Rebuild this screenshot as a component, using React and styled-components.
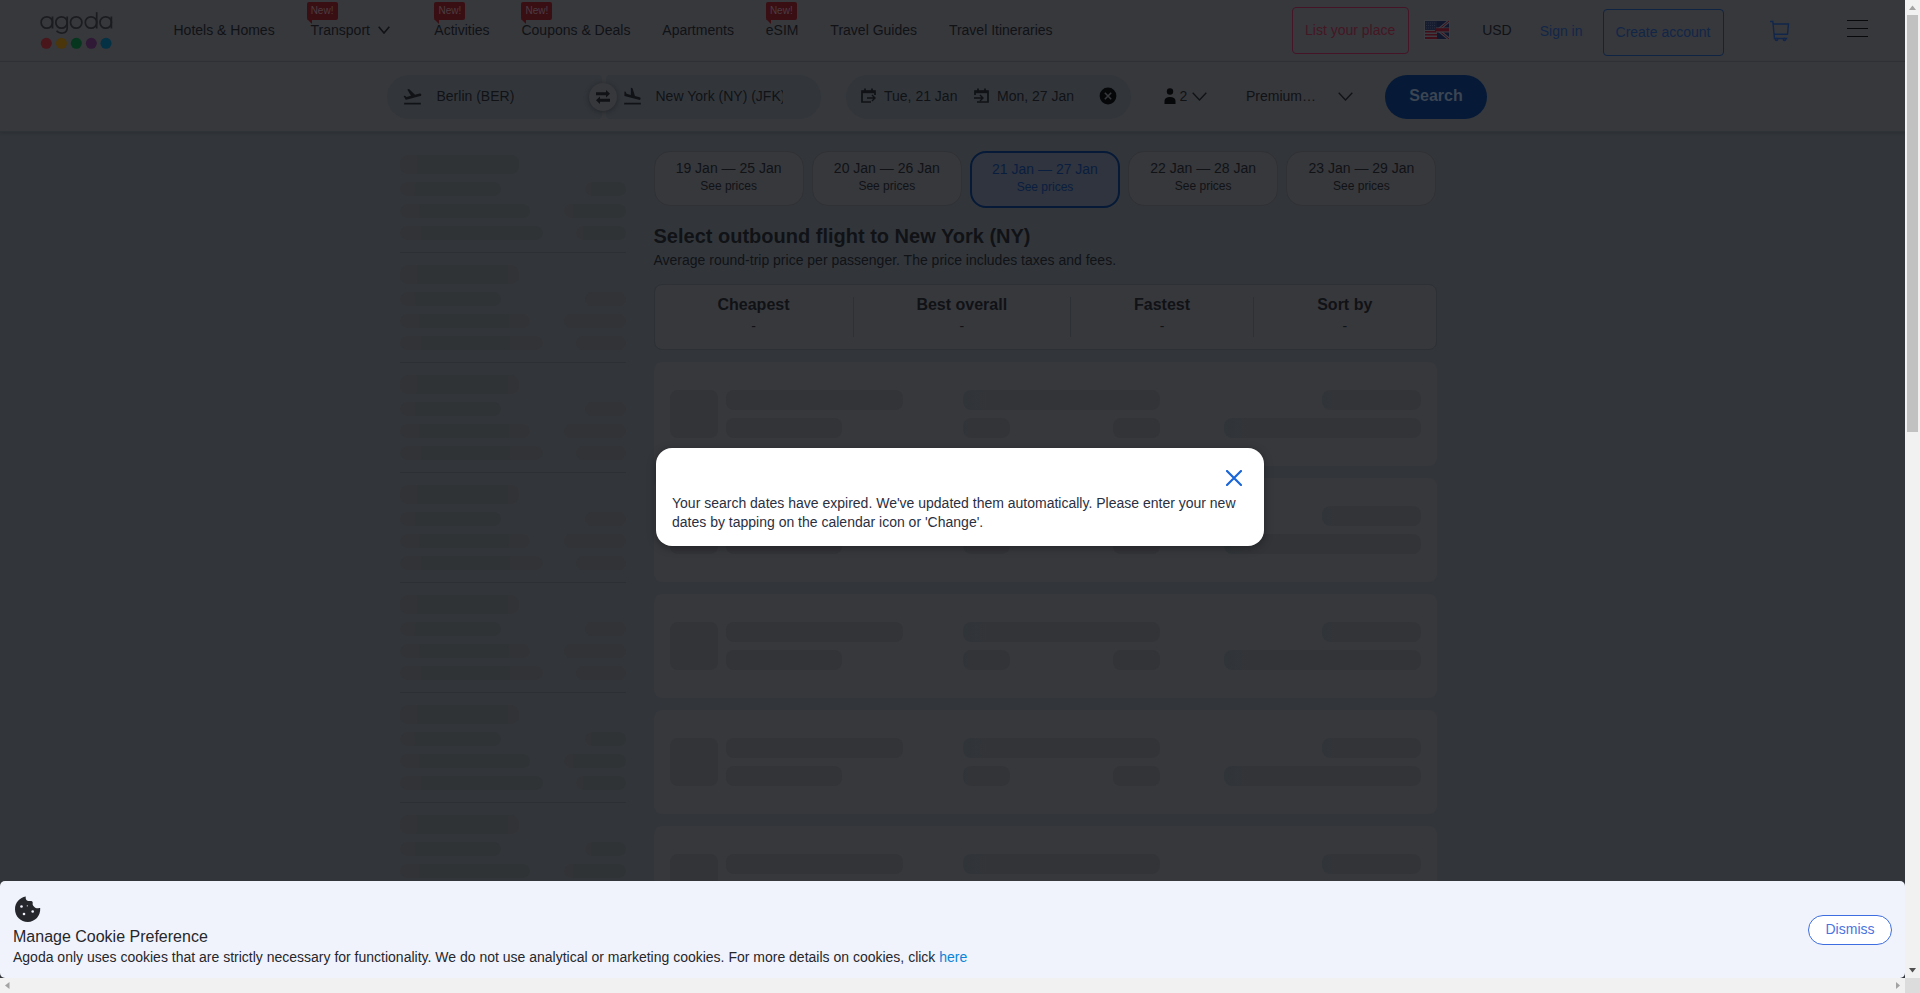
import React from 'react';
import styled, { createGlobalStyle } from 'styled-components';
import { MdFlightTakeoff, MdFlightLand } from 'react-icons/md';

const c = {
  surface: '#37383c',
  page: '#32363b',
  text: '#101216',
  blue: '#122648',
  navy: '#061a38',
  pink: '#451624',
  red: '#3a0f14',
  bone: '#333438',
};

const Global = createGlobalStyle`
  * { box-sizing: border-box; }
  html, body { margin: 0; height: 100%; overflow: hidden; }
  body { font: 14px/18px "Liberation Sans", Arial, sans-serif; color: ${c.text}; background: ${c.page}; }
  button { font: inherit; color: inherit; background: none; border: 0; padding: 0; }
`;

const Window = styled.div`
  display: grid;
  grid-template-columns: 1905px 15px;
  grid-template-rows: 978px 15px;
  width: 1920px;
  height: 993px;
`;
const Viewport = styled.div`
  position: relative;
  overflow: hidden;
  background: ${c.page};
`;
const Header = styled.header`
  display: flex;
  height: 62px;
  padding-left: 40px;
  background: ${c.surface};
  border-bottom: 1px solid #313237;
`;
const Logo = styled.svg`
  display: block;
  flex: none;
  width: 74px;
  height: 44px;
  margin-top: 8px;
`;
const Nav = styled.nav`
  display: flex;
  gap: 31.9px;
  margin-left: 59.5px;
`;
const NavItem = styled.a`
  position: relative;
  display: flex;
  height: 60px;
  align-items: center;
  white-space: nowrap;
  padding: ${(p) => (p.$menu ? '0 12.5px 0 4px' : '0')};
  svg { margin-left: 8px; }
`;
const Badge = styled.span`
  position: absolute;
  top: 2px;
  left: 0;
  width: 31px;
  height: 18px;
  border-radius: 2px;
  background: ${c.red};
  color: #4a3d42;
  font-size: 10px;
  line-height: 17px;
  text-align: center;
  &::after {
    content: '';
    position: absolute;
    left: 0;
    top: 17px;
    border-top: 5px solid ${c.red};
    border-left: 5px solid transparent;
  }
`;
const HeaderTools = styled.div`
  display: flex;
  align-items: flex-start;
  margin-left: auto;
  padding-right: 37.5px;
`;
const OutlineButton = styled.button`
  width: ${(p) => p.$w}px;
  height: 47px;
  margin-top: ${(p) => p.$top}px;
  margin-left: ${(p) => p.$ml || 0}px;
  padding-bottom: 1px;
  border: 1px solid ${(p) => p.$line};
  border-radius: 4px;
  color: ${(p) => p.$color};
`;
const Tool = styled.div`
  display: flex;
  height: ${(p) => p.$h || 60}px;
  align-items: center;
  margin-left: ${(p) => p.$ml}px;
  color: ${(p) => p.$color || c.text};
`;

const SearchBar = styled.section`
  display: flex;
  height: 70px;
  padding: 13px 0 0 387px;
  background: ${c.surface};
  border-bottom: 1px solid #2e3337;
  box-shadow: 0 1px 3px rgba(20, 24, 28, 0.25);
`;
const Field = styled.div`
  display: flex;
  align-items: center;
  width: ${(p) => p.$w}px;
  height: 44px;
  padding: 0 0 2px ${(p) => p.$pl}px;
  margin-left: ${(p) => p.$ml || 0}px;
  border-radius: ${(p) => p.$r || '22px'};
  background: ${(p) => (p.$plain ? 'transparent' : c.page)};
  white-space: nowrap;
  svg { flex: none; }
`;
const FieldText = styled.span`
  margin-left: ${(p) => p.$ml}px;
  width: ${(p) => (p.$w ? `${p.$w}px` : 'auto')};
  overflow: hidden;
`;
const Route = styled.div`
  position: relative;
  display: flex;
  gap: 4px;
`;
const Swap = styled.button`
  position: absolute;
  left: 202px;
  top: 8px;
  display: grid;
  place-items: center;
  width: 28px;
  height: 28px;
  border-radius: 50%;
  background: ${c.surface};
  box-shadow: 0 1px 5px rgba(10, 12, 16, 0.4);
`;
const SearchButton = styled.button`
  width: 102px;
  height: 44px;
  margin-left: 32px;
  padding-bottom: 3px;
  border-radius: 22px;
  background: ${c.navy};
  color: #3c4552;
  font-size: 16px;
  font-weight: 700;
`;

const Content = styled.main`
  display: flex;
  gap: 27.5px;
  padding: 19px 0 0 400px;
`;
const Sidebar = styled.aside`
  width: 226px;
  padding-top: 4px;
`;
const FilterGroup = styled.div`
  display: flex;
  flex-direction: column;
  height: 98px;
  margin-bottom: 12px;
  gap: 8px;
  border-bottom: 1px solid #2c3035;
`;
const FilterRow = styled.div`
  display: flex;
  justify-content: space-between;
`;
const FilterBone = styled.div`
  width: ${(p) => p.$w}px;
  height: ${(p) => p.$h || 14}px;
  border-radius: 7px;
  background: ${(p) => (p.$flat ? '#323336' : `linear-gradient(90deg, #323336 14%, #2f3336 15%, #2f3336 ${p.$end}%, #323336 ${p.$end}%)`)};
`;
const Results = styled.section`
  width: 783px;
`;
const DateRow = styled.div`
  display: grid;
  grid-template-columns: repeat(5, 1fr);
  gap: 8px;
  height: 57px;
  align-items: start;
`;
const DateChip = styled.button`
  display: flex;
  flex-direction: column;
  align-items: center;
  height: ${(p) => (p.$on ? 57 : 55)}px;
  padding-top: 7px;
  border: ${(p) => (p.$on ? `2px solid ${c.navy}` : '1px solid #303135')};
  border-radius: 16px;
  background: ${(p) => (p.$on ? '#30343e' : c.surface)};
  color: ${(p) => (p.$on ? '#0a1e40' : c.text)};
  small { font-size: 12px; line-height: 18px; }
`;
const Title = styled.h1`
  margin: 16px 0 0;
  font-size: 20px;
  line-height: 24px;
`;
const Note = styled.p`
  margin: 3px 0 0;
`;
const SortBar = styled.div`
  display: grid;
  grid-template-columns: 199px 217.5px 183px 1fr;
  height: 66px;
  margin-top: 15px;
  padding: 12px 0;
  border: 1px solid #2d3035;
  border-radius: 8px;
  background: ${c.surface};
`;
const SortCell = styled.div`
  height: 40px;
  text-align: center;
  line-height: 24px;
  border-right: 1px solid #2d3035;
  &:last-child { border-right: 0; }
  b { display: block; font-size: 16px; line-height: 18px; margin-top: -1px; }
`;
const Cards = styled.div`
  display: flex;
  flex-direction: column;
  gap: 12px;
  margin-top: 12px;
`;
const Card = styled.div`
  display: flex;
  align-items: flex-start;
  height: 104px;
  padding: 28px 16px;
  border-radius: 8px;
  background: ${c.surface};
`;
const BoneBlock = styled.div`
  display: flex;
  flex-wrap: wrap;
  justify-content: ${(p) => p.$justify || 'space-between'};
  gap: 8px 0;
  width: ${(p) => p.$w}px;
  margin-left: ${(p) => p.$ml}px;
`;
const Bone = styled.div`
  width: ${(p) => p.$w}px;
  height: ${(p) => p.$h || 20}px;
  border-radius: 8px;
  background: ${(p) => (p.$tint ? 'linear-gradient(90deg, #303539, #333438 14%)' : c.bone)};
`;

const Modal = styled.div`
  position: absolute;
  left: 656px;
  top: 448px;
  display: flex;
  flex-direction: column;
  width: 608px;
  height: 98px;
  padding: 22px 16px 0;
  border-radius: 16px;
  background: #fff;
  color: #2a2f3f;
  box-shadow: 0 2px 8px rgba(0, 0, 0, 0.35);
  line-height: 19px;
`;
const CloseButton = styled.button`
  align-self: flex-end;
  width: 16px;
  height: 16px;
  margin: 0 6px 8px 0;
  svg { display: block; }
`;
const CookieBar = styled.div`
  position: absolute;
  left: 0;
  bottom: 0;
  display: flex;
  justify-content: space-between;
  width: 1905px;
  height: 97px;
  padding: 15px 13px 0;
  border-radius: 5px;
  background: #f0f3fb;
  color: #26272c;
`;
const CookieIcon = styled.svg`
  display: block;
  width: 28px;
  height: 26px;
`;
const CookieTitle = styled.div`
  font-size: 16px;
  line-height: 20px;
  margin-top: 5px;
`;
const CookieText = styled.div`
  line-height: 20px;
  a { color: #0a84d8; }
`;
const Dismiss = styled.button`
  width: 84px;
  height: 30px;
  margin-top: 19px;
  padding-bottom: 2px;
  border: 1px solid #3d6de0;
  border-radius: 15px;
  background: #fff;
  color: #4a74e0;
`;

const VTrack = styled.div`
  display: flex;
  flex-direction: column;
  align-items: center;
  background: #f1f1f1;
  svg { display: block; }
`;
const VThumb = styled.div`
  width: 11px;
  height: 417px;
  margin-bottom: auto;
  background: #c1c1c1;
`;
const HTrack = styled.div`
  display: flex;
  justify-content: space-between;
  background: #f1f1f1;
`;
const Corner = styled.div`
  background: #dcdcdc;
`;

const Arrow = ({ d, fill = '#a3a3a3' }) => (
  <svg width="15" height="15"><path d={d} fill={fill} /></svg>
);
const Chevron = ({ w = 15, h = 9, s = 1.3 }) => (
  <svg width={w} height={h} fill="none" stroke={c.text} strokeWidth={s}>
    <path d={`M.7 .7 L${w / 2} ${h - 1} L${w - 0.7} .7`} />
  </svg>
);
const CalendarIcon = ({ back }) => (
  <svg width="15" height="16" viewBox="0 0 15 16" fill="none" stroke={c.text} strokeWidth="1.7">
    <path d={back ? 'M1 7V3h13v11H3' : 'M14 7V3H1v11h9'} />
    <path d="M1 4h13" strokeWidth="2.4" />
    <path d="M4 .5V4M11 .5V4" />
    <path d={back ? 'M0 10h8M6 7l3 3-3 3' : 'M6 10h7M11 7l3 3-3 3'} strokeWidth="1.4" />
  </svg>
);
const AgodaLogo = () => (
  <Logo viewBox="0 0 74 44" fill="none" stroke="#1b1c20" strokeWidth="1.7">
    <circle cx="6.8" cy="14.5" r="5.7" /><path d="M12.5 8.5v12" />
    <circle cx="21.5" cy="14.5" r="5.7" /><path d="M27.2 8.5v11.5c0 6-8 6.4-10.6 2.8" />
    <circle cx="36.2" cy="14.5" r="5.7" />
    <circle cx="51" cy="14.5" r="5.7" /><path d="M56.7 4.2v16.3" />
    <circle cx="65.7" cy="14.5" r="5.7" /><path d="M71.4 8.5v12" />
    <g stroke="none">
      <circle cx="6.3" cy="35.3" r="5.5" fill="#48161b" />
      <circle cx="21.4" cy="35.3" r="5.5" fill="#4a360a" />
      <circle cx="36.3" cy="35.3" r="5.5" fill="#06361d" />
      <circle cx="51.3" cy="35.3" r="5.5" fill="#301936" />
      <circle cx="66" cy="35.3" r="5.5" fill="#043144" />
    </g>
  </Logo>
);
const FlagIcon = () => (
  <svg width="26" height="20" viewBox="0 0 26 20">
    <path fill="#3c3d42" d="M0 0h26v20H0z" />
    <path fill="#400f19" d="M1 11h12v1.6H1zM1 14h12v1.6H1zM1 17h12v2H1z" />
    <path fill="#161d31" d="M1 1h12v9H1z" />
    <path fill="#11172c" d="M13 1h12v18H13z" />
    <path d="M13 11L25 1M13 9l12 10" stroke="#3d3e46" strokeWidth="3" />
    <path d="M13 11L25 1M13 9l12 10" stroke="#400f19" />
    <path fill="#3d3e46" d="M12 7.5h13v5H12z" />
    <path fill="#400f19" d="M11 8.2h14v3.2H11z" />
    <path d="M2 3h10M2 5.5h10M2 8h10" stroke="#282d3f" strokeDasharray="1 1" />
  </svg>
);
const CartIcon = () => (
  <svg width="21" height="22" viewBox="0 0 21 22" fill="none" stroke="#11264a" strokeWidth="1.4">
    <path d="M1 1.5h2.8l1.7 17h12.8M4.2 4h15.3l-1 10.2H5.2" />
    <circle cx="7.5" cy="19.5" r="1.1" /><circle cx="15.5" cy="19.5" r="1.1" />
  </svg>
);

const navItems = [
  { label: 'Hotels & Homes' },
  { label: 'Transport', badge: true, menu: true },
  { label: 'Activities', badge: true },
  { label: 'Coupons & Deals', badge: true },
  { label: 'Apartments' },
  { label: 'eSIM', badge: true },
  { label: 'Travel Guides' },
  { label: 'Travel Itineraries' },
];
const dates = ['19 Jan — 25 Jan', '20 Jan — 26 Jan', '21 Jan — 27 Jan', '22 Jan — 28 Jan', '23 Jan — 29 Jan'];
const filterRows = [[101, 41], [130, 62], [143, 50]];

export default function App() {
  return (
    <Window>
      <Global />
      <Viewport>
        <Header>
          <AgodaLogo />
          <Nav>
            {navItems.map((n) => (
              <NavItem key={n.label} $menu={n.menu}>
                {n.badge && <Badge>New!</Badge>}
                {n.label}
                {n.menu && <Chevron w={12} h={8} s={1.6} />}
              </NavItem>
            ))}
          </Nav>
          <HeaderTools>
            <OutlineButton $w={117} $top={7} $line="#451426" $color={c.pink}>List your place</OutlineButton>
            <Tool $ml={15.5}><FlagIcon /></Tool>
            <Tool $ml={32}>USD</Tool>
            <Tool $ml={28} $h={62} $color={c.blue}>Sign in</Tool>
            <OutlineButton $w={121} $top={9} $ml={20} $line="#0f2342" $color={c.blue}>Create account</OutlineButton>
            <Tool $ml={45} $h={62}><CartIcon /></Tool>
            <Tool $ml={57} $h={56}>
              <svg width="21" height="18" stroke="#08090b" strokeWidth="1"><path d="M0 1.5h21M0 9.5h21M0 17.5h21" /></svg>
            </Tool>
          </HeaderTools>
        </Header>

        <SearchBar>
          <Route>
            <Field $w={215} $pl={15} $r="22px 4px 4px 22px">
              <MdFlightTakeoff size={21} /><FieldText $ml={13.5}>Berlin (BER)</FieldText>
            </Field>
            <Field $w={215} $pl={15.5} $r="4px 22px 22px 4px">
              <MdFlightLand size={21} /><FieldText $ml={13} $w={127.5}>New York (NY) (JFK)</FieldText>
            </Field>
            <Swap>
              <svg width="16" height="14" viewBox="0 0 16 14" fill={c.text}>
                <path d="M1 2.3h10V0l4 3.8-4 3.7V5.3H1zM15 11.7H5V14l-4-3.7 4-3.8v2.2h10z" />
              </svg>
            </Swap>
          </Route>
          <Field $w={285} $pl={15} $ml={25}>
            <CalendarIcon /><FieldText $ml={8} $w={90}>Tue, 21 Jan</FieldText>
            <CalendarIcon back /><FieldText $ml={8} $w={102}>Mon, 27 Jan</FieldText>
            <svg width="18" height="18" viewBox="0 0 18 18"><circle cx="9" cy="9" r="8.4" fill="#060709" /><path d="M5.8 5.8l6.4 6.4M12.2 5.8l-6.4 6.4" stroke={c.surface} strokeWidth="1.6" /></svg>
          </Field>
          <Field $w={77} $pl={33} $plain>
            <svg width="12" height="16" viewBox="0 0 12 16" fill="#060709"><circle cx="6" cy="3.5" r="3.2" /><path d="M.5 16v-3c0-5.5 11-5.5 11 0v3z" /></svg>
            <FieldText $ml={3.5}>2</FieldText>
            <FieldText $ml={5}><Chevron /></FieldText>
          </Field>
          <Field $w={107} $pl={0} $ml={38} $plain>
            <FieldText $w={92}>Premium…</FieldText><Chevron />
          </Field>
          <SearchButton>Search</SearchButton>
        </SearchBar>

        <Content>
          <Sidebar>
            {[0, 1, 2, 3, 4, 5, 6].map((g) => (
              <FilterGroup key={g}>
                <FilterBone $w={119} $h={19} $end={g ? 91 : 100} />
                {filterRows.map(([a, b]) => (
                  <FilterRow key={a}>
                    <FilterBone $w={a} $end={g && g < 5 && a > 110 ? (a > 140 ? 77 : 84) : 100} />
                    <FilterBone $w={b} $flat={g > 0 && g < 5} $end={100} />
                  </FilterRow>
                ))}
              </FilterGroup>
            ))}
          </Sidebar>
          <Results>
            <DateRow>
              {dates.map((d, i) => (
                <DateChip key={d} $on={i === 2}>{d}<small>See prices</small></DateChip>
              ))}
            </DateRow>
            <Title>Select outbound flight to New York (NY)</Title>
            <Note>Average round-trip price per passenger. The price includes taxes and fees.</Note>
            <SortBar>
              {['Cheapest', 'Best overall', 'Fastest', 'Sort by'].map((s) => (
                <SortCell key={s}><b>{s}</b>-</SortCell>
              ))}
            </SortBar>
            <Cards>
              {[0, 1, 2, 3, 4].map((k) => (
                <Card key={k}>
                  <Bone $w={48} $h={48} />
                  <BoneBlock $w={177} $ml={8}><Bone $w={177} /><Bone $w={116} /></BoneBlock>
                  <BoneBlock $w={197} $ml={60}><Bone $w={197} $tint /><Bone $w={47} $tint /><Bone $w={47} /></BoneBlock>
                  <BoneBlock $w={197} $ml={64} $justify="flex-end"><Bone $w={99} $tint /><Bone $w={197} $tint /></BoneBlock>
                </Card>
              ))}
            </Cards>
          </Results>
        </Content>

        <Modal>
          <CloseButton>
            <svg width="16" height="16" stroke="#1a66d9" strokeWidth="2.2" strokeLinecap="round"><path d="M1 1l14 14M15 1L1 15" /></svg>
          </CloseButton>
          <span>Your search dates have expired. We've updated them automatically. Please enter your new dates by tapping on the calendar icon or 'Change'.</span>
        </Modal>

        <CookieBar>
          <div>
            <CookieIcon viewBox="0 0 28 26">
              <path fill="#26272c" d="M12.8.5c-.6 2.3.5 4 2.4 4.5h3.2c1.4.3 1.5 1.6 1.2 3.3.4 1.8 1.6 2.3 2.6 3.4 1.5.6 3.2.6 5 .4C27.8 20 22 26 14.8 26 7.7 26 2 20.4 2 13.3 2 6.6 6.8 1.3 12.8.5z" />
              <g fill="#f0f3fb"><circle cx="8.5" cy="10.5" r="1.3" /><circle cx="11" cy="18" r="1.3" /><circle cx="19.7" cy="15.5" r="1.3" /><circle cx="14.3" cy="9.8" r=".6" /></g>
            </CookieIcon>
            <CookieTitle>Manage Cookie Preference</CookieTitle>
            <CookieText>Agoda only uses cookies that are strictly necessary for functionality. We do not use analytical or marketing cookies. For more details on cookies, click <a>here</a></CookieText>
          </div>
          <Dismiss>Dismiss</Dismiss>
        </CookieBar>
      </Viewport>
      <VTrack>
        <Arrow d="M4 10l3.5-4.5L11 10z" />
        <VThumb />
        <Arrow d="M4 5l3.5 4.5L11 5z" fill="#505050" />
      </VTrack>
      <HTrack>
        <Arrow d="M9.5 4L5 7.5 9.5 11z" />
        <Arrow d="M6 4l4 3.5L6 11z" />
      </HTrack>
      <Corner />
    </Window>
  );
}
